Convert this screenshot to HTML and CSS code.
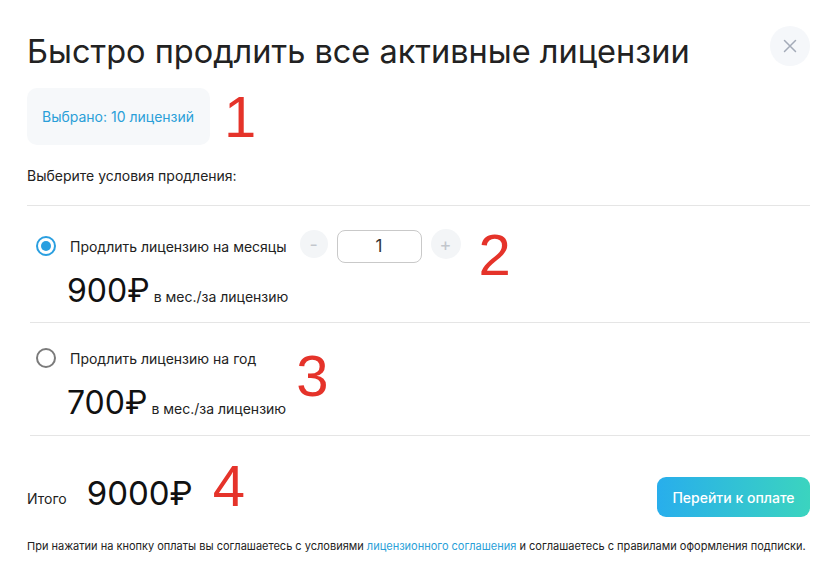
FILE: index.html
```html
<!DOCTYPE html>
<html lang="ru">
<head>
<meta charset="utf-8">
<title>Быстро продлить все активные лицензии</title>
<link rel="stylesheet" href="styles.css">
</head>
<body>
<div class="modal">
  <header class="head">
    <h1 class="title">Быстро продлить все активные лицензии</h1>
    <button class="close" aria-label="Закрыть">
      <svg width="14" height="14" viewBox="0 0 14 14"><path d="M1.5 1.5l11 11M12.5 1.5l-11 11" stroke="#a4abb8" stroke-width="1.5" fill="none" stroke-linecap="round"/></svg>
    </button>
  </header>

  <div class="badge-row">
    <div class="badge">Выбрано: 10 лицензий</div>
    <span class="mark mark-1">1</span>
  </div>

  <p class="hint">Выберите условия продления:</p>

  <div class="option option-first">
    <div class="opt-row">
      <span class="radio checked"></span>
      <span class="opt-label">Продлить лицензию на месяцы</span>
      <span class="step step-minus">-</span>
      <span class="qty">1</span>
      <span class="step step-plus">+</span>
      <span class="mark mark-2">2</span>
    </div>
    <div class="price"><span class="amount">900₽</span><span class="unit">в мес./за лицензию</span></div>
  </div>

  <div class="option option-second">
    <div class="opt-row">
      <span class="radio"></span>
      <span class="opt-label">Продлить лицензию на год</span>
      <span class="mark mark-3">3</span>
    </div>
    <div class="price"><span class="amount">700₽</span><span class="unit">в мес./за лицензию</span></div>
  </div>

  <div class="total-row">
    <span class="total-label">Итого</span>
    <span class="total">9000₽</span>
    <span class="mark mark-4">4</span>
    <button class="pay">Перейти к оплате</button>
  </div>

  <p class="legal">При нажатии на кнопку оплаты вы соглашаетесь с условиями <a href="#">лицензионного соглашения</a> и соглашаетесь с правилами оформления подписки.</p>
</div>
</body>
</html>
```

FILE: styles.css
```css
* { box-sizing: border-box; }
html, body { margin: 0; padding: 0; background: #fff; }
body {
  font-family: Inter, "Noto Sans", "Liberation Sans", sans-serif;
  color: #222;
}
.modal {
  width: 832px;
  height: 572px;
  padding: 26px 22px 0 27px;
}
.head {
  display: flex;
  align-items: flex-start;
  justify-content: space-between;
  height: 40px;
}
.title {
  margin: 6px 0 0;
  font-size: 32.5px;
  font-weight: 400;
  line-height: 40px;
  color: #222;
}
.close {
  width: 40px;
  height: 40px;
  border-radius: 50%;
  border: none;
  background: #f5f7fa;
  display: flex;
  align-items: center;
  justify-content: center;
  padding: 0;
}
.badge-row {
  display: flex;
  align-items: center;
  gap: 14px;
  margin-top: 22px;
}
.badge {
  width: 183px;
  height: 57px;
  border-radius: 10px;
  background: #f6f8fa;
  color: #2a9fd8;
  font-size: 14px;
  display: flex;
  align-items: center;
  padding-left: 15px;
}
.mark {
  font-family: "Liberation Sans", Arial, sans-serif;
  color: #e5332a;
  font-size: 58px;
  line-height: 28px;
  height: 28px;
  display: block;
}
.hint {
  margin: 22px 0 0;
  font-size: 14px;
  line-height: 17px;
}
.option {
  border-top: 1px solid #e5e5e5;
  border-bottom: 1px solid #e5e5e5;
  margin-left: 3px;
  padding: 18px 0 0 6px;
  height: 114px;
}
.option-first {
  margin-top: 21px;
  margin-left: 0;
  padding-left: 9px;
  padding-top: 23px;
  border-bottom: none;
  height: 117px;
}
.opt-row {
  display: flex;
  align-items: center;
  height: 34px;
}
.radio {
  width: 20px;
  height: 20px;
  border-radius: 50%;
  border: 2px solid #7b7b7b;
  display: flex;
  align-items: center;
  justify-content: center;
  flex: none;
}
.radio.checked { border-color: #2a9fe0; }
.radio.checked::after {
  content: "";
  width: 10px;
  height: 10px;
  border-radius: 50%;
  background: #2a9fe0;
}
.opt-label {
  margin-left: 14px;
  font-size: 14px;
  color: #222;
}
.step {
  width: 28px;
  height: 28px;
  border-radius: 50%;
  background: #f3f5f7;
  color: #c2c6cc;
  display: flex;
  align-items: center;
  justify-content: center;
  font-size: 18px;
  margin-top: -4px;
  flex: none;
}
.step-minus { margin-left: 13px; }
.step-plus { width: 30px; height: 30px; }
.qty {
  width: 85px;
  height: 33px;
  border: 1px solid #c9c9c9;
  border-radius: 8px;
  margin-left: 9px;
  margin-right: 9px;
  display: flex;
  align-items: center;
  justify-content: center;
  font-size: 17px;
  color: #333;
  flex: none;
}
.mark-2 { margin-left: 18px; margin-top: 18px; }
.mark-3 { margin-left: 40px; margin-top: 36px; }
.price {
  display: flex;
  align-items: baseline;
  margin-left: 31px;
  margin-top: 8px;
}
.amount {
  font-size: 32px;
  line-height: 40px;
  color: #111;
}
.unit {
  font-size: 14px;
  margin-left: 4px;
}
.total-row {
  display: flex;
  align-items: center;
  height: 40px;
  margin-top: 41px;
}
.total-label {
  font-size: 14px;
  margin-top: 2px;
}
.total {
  font-size: 33px;
  color: #111;
  margin-left: 20px;
  margin-top: -8px;
}
.mark-4 { margin-left: 20px; margin-top: -22px; }
.pay {
  margin-left: auto;
  width: 153px;
  height: 40px;
  border: none;
  border-radius: 9px;
  background: linear-gradient(90deg, #28aeec 0%, #3bd4bf 100%);
  color: #fff;
  font-family: Inter, "Noto Sans", sans-serif;
  font-size: 14px;
  font-weight: 500;
}
.legal {
  margin: 22px 0 0;
  font-size: 11px;
  line-height: 15px;
  color: #222;
}
.legal a { color: #2a9fd8; text-decoration: none; }
```
